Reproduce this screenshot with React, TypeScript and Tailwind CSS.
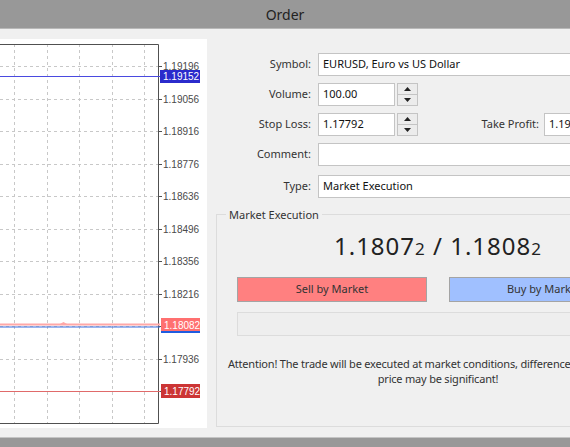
import React from 'react';

const gridYs = Array.from({ length: 11 }, (_, i) => 27 + 32.5 * i);
const gridXs = [14, 47, 79, 112, 144];
const gridLabels: Record<number, string> = {
  0: '1.19196',
  1: '1.19056',
  2: '1.18916',
  3: '1.18776',
  4: '1.18636',
  5: '1.18496',
  6: '1.18356',
  7: '1.18216',
  9: '1.17936',
};

function Chart() {
  return (
    <svg width="207" height="389" viewBox="0 0 207 389" className="block">
      {/* grid */}
      {gridXs.map((x) => (
        <line key={x} x1={x + 0.5} y1={5} x2={x + 0.5} y2={384} stroke="#c8c8c8" strokeDasharray="3 3" />
      ))}
      {gridYs.map((y) => (
        <line key={y} x1={0} y1={Math.round(y) + 0.5} x2={158} y2={Math.round(y) + 0.5} stroke="#c8c8c8" strokeDasharray="3 3" />
      ))}

      {/* frame */}
      <path d="M0 5.5 H158.5 V384.5 H0" fill="none" stroke="#505050" />

      {/* axis ticks + labels */}
      {gridYs.map((y, i) => (
        <g key={i}>
          <line x1={158} y1={Math.round(y) + 0.5} x2={162} y2={Math.round(y) + 0.5} stroke="#505050" />
          {gridLabels[i] && (
            <text x={163} y={Math.round(y) + 4} fontSize="10" fill="#4a4a4a" fontFamily="'Liberation Sans', Arial, sans-serif">
              {gridLabels[i]}
            </text>
          )}
        </g>
      ))}

      {/* take profit line */}
      <line x1={0} y1={37.5} x2={160} y2={37.5} stroke="#4a4ae0" />
      <rect x={160} y={31} width={40} height={13} fill="#2b2bcc" />
      <text x={163} y={41} fontSize="10" fill="#fff" fontFamily="'Liberation Sans', Arial, sans-serif">
        1.19152
      </text>

      {/* ask / bid */}
      <line x1={0} y1={285.5} x2={160} y2={285.5} stroke="#ffa8a8" strokeWidth={2} />
      <path d="M60 285 L63.5 283 L67 285 Z" fill="#ffa8a8" />
      <line x1={0} y1={288} x2={160} y2={288} stroke="#3a6ee0" strokeWidth={1.2} />
      <rect x={161} y={279} width={39} height={14} fill="#ff7070" />
      <rect x={161} y={292} width={39} height={2} fill="#1f5ce0" />
      <text x={164} y={290} fontSize="10" fill="#fff" fontFamily="'Liberation Sans', Arial, sans-serif">
        1.18082
      </text>

      {/* stop loss */}
      <line x1={0} y1={352.5} x2={160} y2={352.5} stroke="#e06a6a" />
      <rect x={161} y={345} width={39} height={14} fill="#cc3535" />
      <text x={164} y={356} fontSize="10" fill="#fff" fontFamily="'Liberation Sans', Arial, sans-serif">
        1.17792
      </text>
    </svg>
  );
}

function Spin() {
  return (
    <div className="ml-[2px] w-[21px] h-[23px] border border-[#c4c4c4] bg-[#ececec] flex flex-col">
      <div className="flex-1 flex items-center justify-center border-b border-[#c4c4c4]">
        <svg width="7" height="4" viewBox="0 0 7 4">
          <path d="M0 4 L3.5 0 L7 4 Z" fill="#222" />
        </svg>
      </div>
      <div className="flex-1 flex items-center justify-center">
        <svg width="7" height="4" viewBox="0 0 7 4">
          <path d="M0 0 L3.5 4 L7 0 Z" fill="#222" />
        </svg>
      </div>
    </div>
  );
}

function Field({ value, width }: { value: string; width: string }) {
  return (
    <div className={`${width} h-[23px] shrink-0 bg-white border border-[#c4c4c4] flex items-center px-[4px] text-[#111]`}>
      {value}
    </div>
  );
}

function Row({ label, children, className = '' }: { label: string; children: React.ReactNode; className?: string }) {
  return (
    <div className={`flex items-center ${className}`}>
      <div className="w-[104px] shrink-0 text-right">{label}</div>
      <div className="ml-[7px] flex items-center">{children}</div>
    </div>
  );
}

export default function App() {
  return (
    <div className="w-[570px] h-[447px] overflow-hidden bg-[#f0f0f0] flex flex-col font-['Noto_Sans',sans-serif] text-[11px] text-[#333]">
      {/* title bar */}
      <div className="h-[29px] shrink-0 bg-[#989898] border-b border-[#b8b8b8] flex items-center justify-center text-[14px] text-[#222]">
        Order
      </div>

      <div className="flex-1 flex min-h-0">
        {/* chart */}
        <div className="w-[207px] shrink-0 pt-[10px] pb-[9px]">
          <div className="h-full bg-white">
            <Chart />
          </div>
        </div>

        {/* order form */}
        <div className="flex-1 pt-[24px]">
          <Row label="Symbol:">
            <Field value="EURUSD, Euro vs US Dollar" width="w-[300px]" />
          </Row>
          <Row label="Volume:" className="mt-[7px]">
            <Field value="100.00" width="w-[77px]" />
            <Spin />
          </Row>
          <Row label="Stop Loss:" className="mt-[7px]">
            <Field value="1.17792" width="w-[77px]" />
            <Spin />
            <div className="w-[121px] shrink-0 text-right">Take Profit:</div>
            <div className="ml-[5px]">
              <Field value="1.19152" width="w-[80px]" />
            </div>
          </Row>
          <Row label="Comment:" className="mt-[7px]">
            <Field value="" width="w-[300px]" />
          </Row>
          <Row label="Type:" className="mt-[9px]">
            <Field value="Market Execution" width="w-[300px]" />
          </Row>

          <fieldset className="ml-[9px] mt-[8px] w-[442px] h-[221px] border border-[#dcdcdc]">
            <legend className="ml-[9px] px-[3px] leading-[17px]">Market Execution</legend>
            <div className="px-[20px]">
              <div className="mt-[7px] text-center text-[24px] leading-[32px] tracking-[1px] text-[#222]">
                1.1807<span className="text-[17px]">2</span> / 1.1808<span className="text-[17px]">2</span>
              </div>
              <div className="mt-[12px] flex gap-[22px]">
                <div className="w-[190px] h-[25px] bg-[#ff8080] border border-[#a4a4a4] flex items-center justify-center">
                  Sell by Market
                </div>
                <div className="w-[190px] h-[25px] bg-[#a0c0ff] border border-[#a4a4a4] flex items-center justify-center">
                  Buy by Market
                </div>
              </div>
              <div className="mt-[10px] h-[24px] border border-[#dcdcdc] bg-[#eeeeee]" />
            </div>
            <div className="mt-[20px] text-center leading-[15px] tracking-[-0.2px] whitespace-nowrap">
              Attention! The trade will be executed at market conditions, difference with requested
              <br />
              price may be significant!
            </div>
          </fieldset>
        </div>
      </div>

      {/* bottom bar */}
      <div className="h-[10px] shrink-0 bg-[#989898] border-t border-[#c4c4c4]" />
    </div>
  );
}
